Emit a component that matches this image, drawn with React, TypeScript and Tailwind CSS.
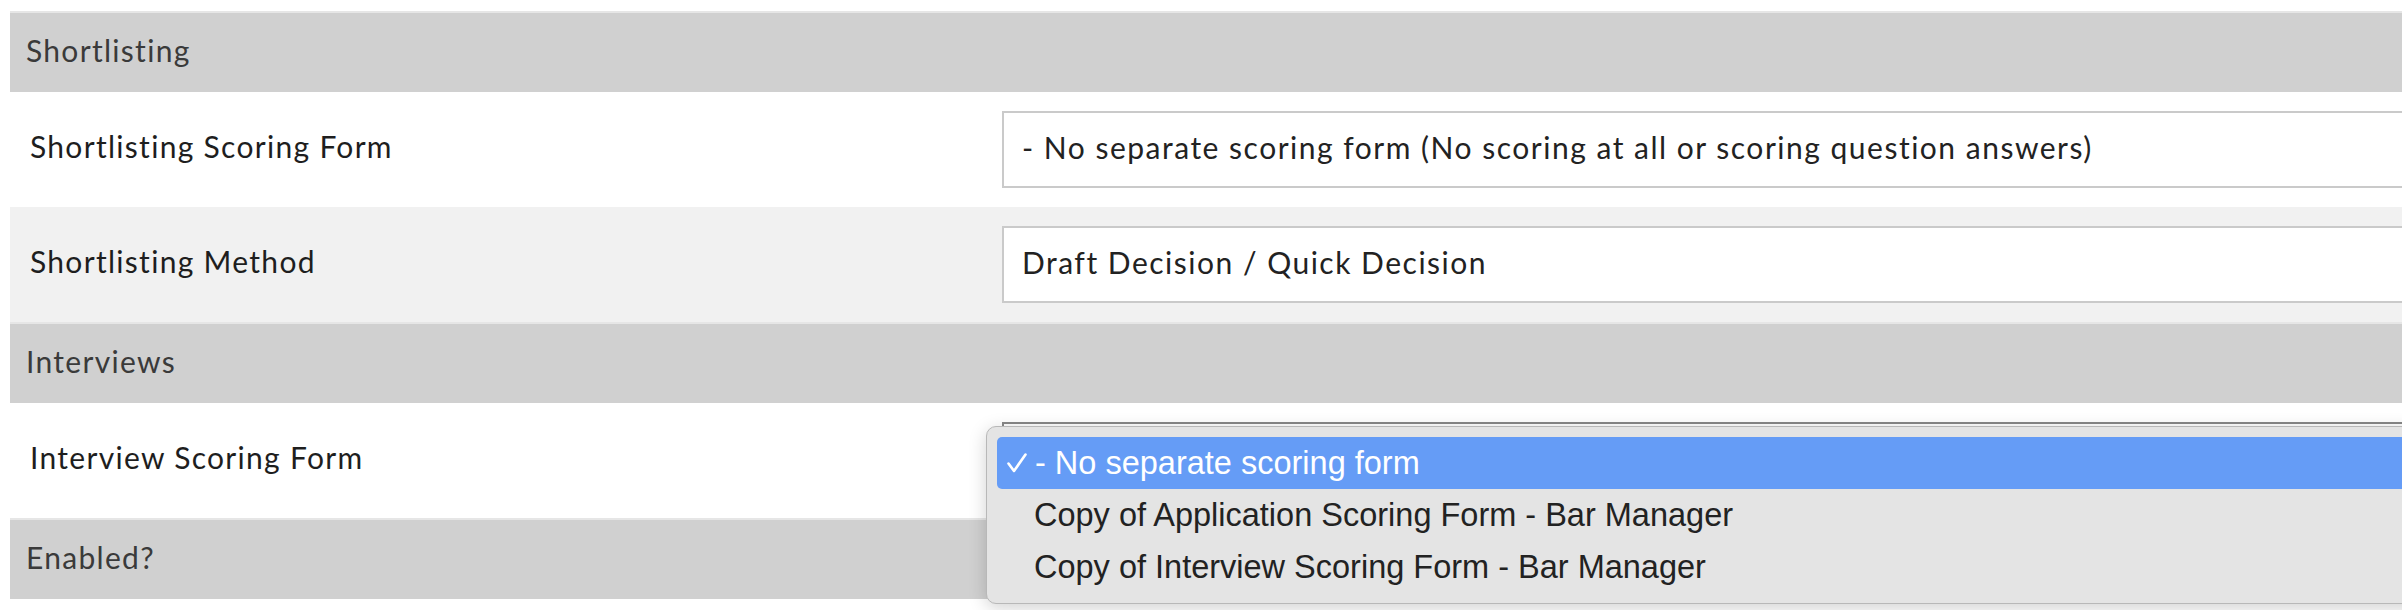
import React from "react";

const labelFont = "font-['Lato','Noto_Sans',sans-serif] text-[30px] tracking-[1.3px]";

function SectionHeader({ title }: { title: string }) {
  return (
    <div className="flex h-[81px] items-center border-t-2 border-[#e6e6e6] bg-[#d0d0d0] pb-[5px] pl-[16px]">
      <span className={`${labelFont} text-[#3a3a3a]`}>{title}</span>
    </div>
  );
}

function SelectBox({ value, focused }: { value: string; focused?: boolean }) {
  return (
    <div
      className={`flex h-[77px] w-full items-center border-2 bg-white pb-[4px] pl-[18px] ${
        focused ? "border-[#888888]" : "border-[#cacaca]"
      }`}
    >
      <span className={`${labelFont} tracking-[1.5px] text-[#222222]`}>{value}</span>
    </div>
  );
}

function FieldRow({
  label,
  value,
  shaded,
  children,
}: {
  label: string;
  value: string;
  shaded?: boolean;
  children?: React.ReactNode;
}) {
  return (
    <div className={`relative grid h-[115px] grid-cols-[992px_1fr] items-center ${shaded ? "bg-[#f1f1f1]" : "bg-white"}`}>
      <div className={`${labelFont} pb-[6px] pl-[20px] text-[#1e1e1e]`}>{label}</div>
      <SelectBox value={value} focused={!!children} />
      {children}
    </div>
  );
}

function OptionsMenu() {
  const options = [
    "Copy of Application Scoring Form - Bar Manager",
    "Copy of Interview Scoring Form - Bar Manager",
  ];
  return (
    <div className="absolute left-[976px] top-[23px] z-10 w-[1500px] rounded-[10px] border border-[#b8b8b8] bg-[#e4e4e4] px-[10px] py-[10px] shadow-[0_4px_18px_rgba(0,0,0,0.18)] font-['Liberation_Sans',Arial,sans-serif] text-[32.5px]">
      <div className="flex h-[52px] items-center rounded-[5px] bg-[#659cf6] pl-[10px] text-white">
        <span className="flex w-[28px] items-center">
          <svg width="20" height="20" viewBox="0 0 20 20" fill="none">
            <path d="M1.5 10.5 L7 18 L18.5 1.5" stroke="white" strokeWidth="2.6" strokeLinecap="round" strokeLinejoin="round" />
          </svg>
        </span>
        <span>- No separate scoring form</span>
      </div>
      {options.map((o) => (
        <div key={o} className="flex h-[52px] items-center pl-[37px] text-[#222222]">
          {o}
        </div>
      ))}
    </div>
  );
}

export default function App() {
  return (
    <div className="h-[610px] w-full overflow-hidden bg-white pt-[11px]">
      <div className="ml-[10px] w-[2440px]">
        <SectionHeader title="Shortlisting" />
        <FieldRow
          label="Shortlisting Scoring Form"
          value="- No separate scoring form (No scoring at all or scoring question answers)"
        />
        <FieldRow label="Shortlisting Method" value="Draft Decision / Quick Decision" shaded />
        <SectionHeader title="Interviews" />
        <FieldRow label="Interview Scoring Form" value="- No separate scoring form">
          <OptionsMenu />
        </FieldRow>
        <SectionHeader title="Enabled?" />
      </div>
    </div>
  );
}
